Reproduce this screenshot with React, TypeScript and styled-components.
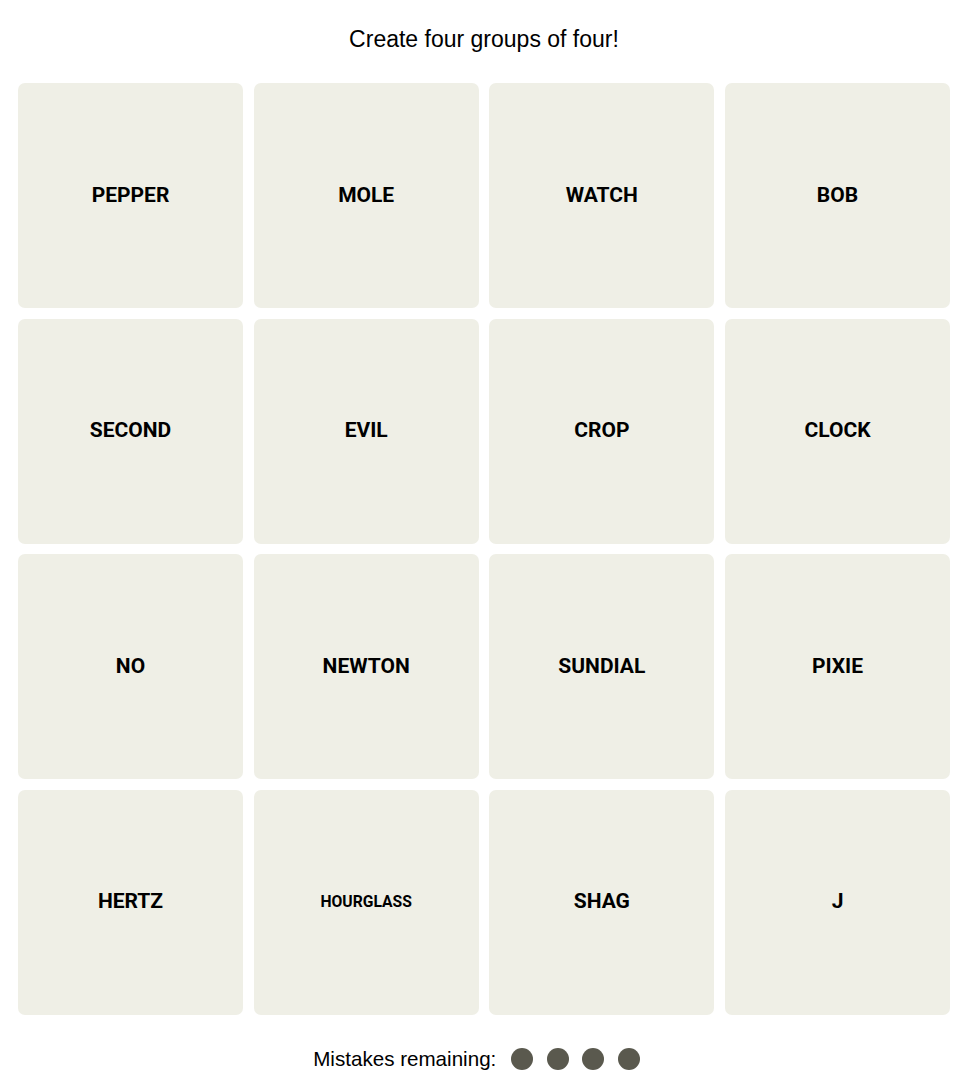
import styled, { createGlobalStyle } from "styled-components";

const GlobalStyle = createGlobalStyle`
  html, body {
    margin: 0;
    padding: 0;
    background: #ffffff;
    font-family: "Liberation Sans", Arial, sans-serif;
    color: #000000;
  }
`;

const Page = styled.main`
  width: 968px;
  display: flex;
  flex-direction: column;
  align-items: center;
`;

const Prompt = styled.h2`
  margin: 0;
  height: 83px;
  display: flex;
  align-items: center;
  justify-content: center;
  padding-bottom: 4px;
  box-sizing: border-box;
  font-size: 23px;
  font-weight: 400;
`;

const Board = styled.div`
  width: 932px;
  display: grid;
  grid-template-columns: repeat(4, 1fr);
  grid-auto-rows: 225px;
  gap: 10.67px;
`;

const Tile = styled.button<{ $small?: boolean }>`
  border: none;
  border-radius: 7px;
  background: #efefe6;
  display: flex;
  align-items: center;
  justify-content: center;
  padding: 0 0 2px;
  font-family: "Roboto", "Liberation Sans", sans-serif;
  font-weight: 700;
  font-size: ${(p) => (p.$small ? "15.7px" : "21px")};
  color: #000000;
  text-transform: uppercase;
  cursor: pointer;
`;

const Mistakes = styled.div`
  height: 88px;
  margin-right: 15px;
  display: flex;
  align-items: center;
  gap: 15px;
  font-size: 20.6px;
`;

const Dots = styled.div`
  display: flex;
  gap: 13.5px;
`;

const Dot = styled.span`
  width: 22px;
  height: 22px;
  border-radius: 50%;
  background: #5a594e;
`;

const words = [
  "PEPPER", "MOLE", "WATCH", "BOB",
  "SECOND", "EVIL", "CROP", "CLOCK",
  "NO", "NEWTON", "SUNDIAL", "PIXIE",
  "HERTZ", "HOURGLASS", "SHAG", "J",
];

export default function App() {
  return (
    <>
      <GlobalStyle />
      <Page>
        <Prompt>Create four groups of four!</Prompt>
        <Board>
          {words.map((w) => (
            <Tile key={w} $small={w.length > 8}>{w}</Tile>
          ))}
        </Board>
        <Mistakes>
          <span>Mistakes remaining:</span>
          <Dots>
            {[0, 1, 2, 3].map((i) => (
              <Dot key={i} />
            ))}
          </Dots>
        </Mistakes>
      </Page>
    </>
  );
}
